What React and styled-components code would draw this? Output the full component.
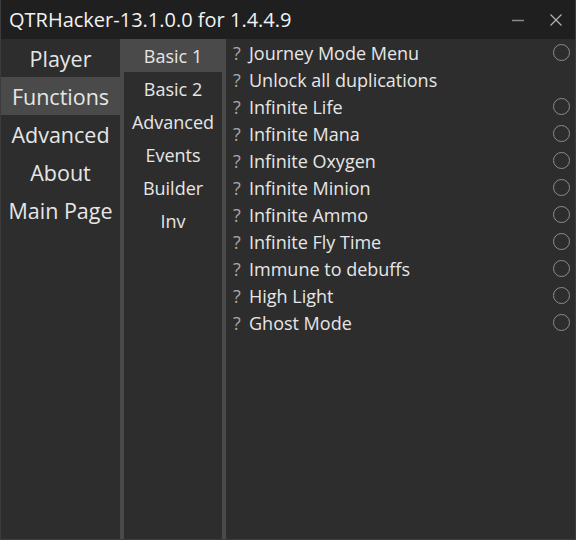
import React, { useState } from "react"
import styled, { createGlobalStyle } from 'styled-components';

const colors = {
  title: '#1f1f1f',
  body: '#2d2d2d',
  selected: '#4a4a4a',
  border: '#3c3c3c',
  text: '#e6e6e6',
  muted: '#a8a8a8',
};

const mainTabs = ['Player', 'Functions', 'Advanced', 'About', 'Main Page'];
const subTabs = ['Basic 1', 'Basic 2', 'Advanced', 'Events', 'Builder', 'Inv'];
const functions = [
  { name: 'Journey Mode Menu', toggle: true },
  { name: 'Unlock all duplications', toggle: false },
  { name: 'Infinite Life', toggle: true },
  { name: 'Infinite Mana', toggle: true },
  { name: 'Infinite Oxygen', toggle: true },
  { name: 'Infinite Minion', toggle: true },
  { name: 'Infinite Ammo', toggle: true },
  { name: 'Infinite Fly Time', toggle: true },
  { name: 'Immune to debuffs', toggle: true },
  { name: 'High Light', toggle: true },
  { name: 'Ghost Mode', toggle: true },
];

const App = () => {
  const [tab, setTab] = useState('Functions');
  const [sub, setSub] = useState('Basic 1');
  return (
    <>
      <GlobalStyle />
      <Window>
        <TitleBar>
          <Title>QTRHacker-13.1.0.0 for 1.4.4.9</Title>
          <Controls>
            <ControlButton>
              <svg width="14" height="14" viewBox="0 0 14 14">
                <line x1="1" y1="7.5" x2="13" y2="7.5" stroke="#8a8a8a" strokeWidth="1.5" />
              </svg>
            </ControlButton>
            <ControlButton>
              <svg width="14" height="14" viewBox="0 0 14 14">
                <path d="M1.5 1.5 L12.5 12.5 M12.5 1.5 L1.5 12.5" stroke="#b4b4b4" strokeWidth="1.2" fill="none" />
              </svg>
            </ControlButton>
          </Controls>
        </TitleBar>
        <Body>
          <MainNav>
            {mainTabs.map(t => (
              <MainTab key={t} $active={t === tab} onClick={() => setTab(t)}>{t}</MainTab>
            ))}
          </MainNav>
          <SubNav>
            {subTabs.map(t => (
              <SubTab key={t} $active={t === sub} onClick={() => setSub(t)}>{t}</SubTab>
            ))}
          </SubNav>
          <Content>
            {functions.map(f => (
              <Row key={f.name}>
                <Help>?</Help>
                <Label>{f.name}</Label>
                {f.toggle && <Radio />}
              </Row>
            ))}
          </Content>
        </Body>
      </Window>
    </>
  );
}

const GlobalStyle = createGlobalStyle`
  html, body {
    margin: 0;
    padding: 0;
    background: ${colors.body};
  }
  * { box-sizing: border-box; }
`;

const Window = styled.div`
  width: 576px;
  height: 540px;
  display: flex;
  flex-direction: column;
  border: 1px solid ${colors.border};
  border-top: none;
  background-color: ${colors.body};
  font-family: "Open Sans", "Noto Sans", sans-serif;
  color: ${colors.text};
  user-select: none;
`;

const TitleBar = styled.div`
  height: 39px;
  flex: none;
  display: flex;
  align-items: center;
  justify-content: space-between;
  background-color: ${colors.title};
  padding: 0 6px 0 8px;
`;

const Title = styled.div`
  font-size: 20px;
  color: #f2f2f2;
  padding-bottom: 1px;
`;

const Controls = styled.div`
  display: flex;
  align-items: center;
  gap: 12px;
`;

const ControlButton = styled.div`
  width: 26px;
  height: 26px;
  display: flex;
  align-items: center;
  justify-content: center;
`;

const Body = styled.div`
  flex: 1;
  display: flex;
  min-height: 0;
`;

const MainNav = styled.div`
  width: 123px;
  flex: none;
  display: flex;
  flex-direction: column;
  border-right: 4px solid ${colors.selected};
`;

const MainTab = styled.div`
  height: 38px;
  display: flex;
  align-items: center;
  justify-content: center;
  font-size: 21.5px;
  background-color: ${p => p.$active ? colors.selected : 'transparent'};
  cursor: pointer;
`;

const SubNav = styled.div`
  width: 102px;
  flex: none;
  display: flex;
  flex-direction: column;
  border-right: 4px solid ${colors.selected};
`;

const SubTab = styled.div`
  height: 33px;
  display: flex;
  align-items: center;
  justify-content: center;
  font-size: 18px;
  background-color: ${p => p.$active ? colors.selected : 'transparent'};
  cursor: pointer;
`;

const Content = styled.div`
  flex: 1;
  display: flex;
  flex-direction: column;
  padding: 0 5px 0 7px;
`;

const Row = styled.div`
  height: 27px;
  display: flex;
  align-items: center;
  font-size: 18px;
`;

const Help = styled.span`
  color: ${colors.muted};
  width: 16px;
`;

const Label = styled.span`
  flex: 1;
`;

const Radio = styled.span`
  width: 17px;
  height: 17px;
  border-radius: 50%;
  border: 1.5px solid #8c8c8c;
`;

export default App;
